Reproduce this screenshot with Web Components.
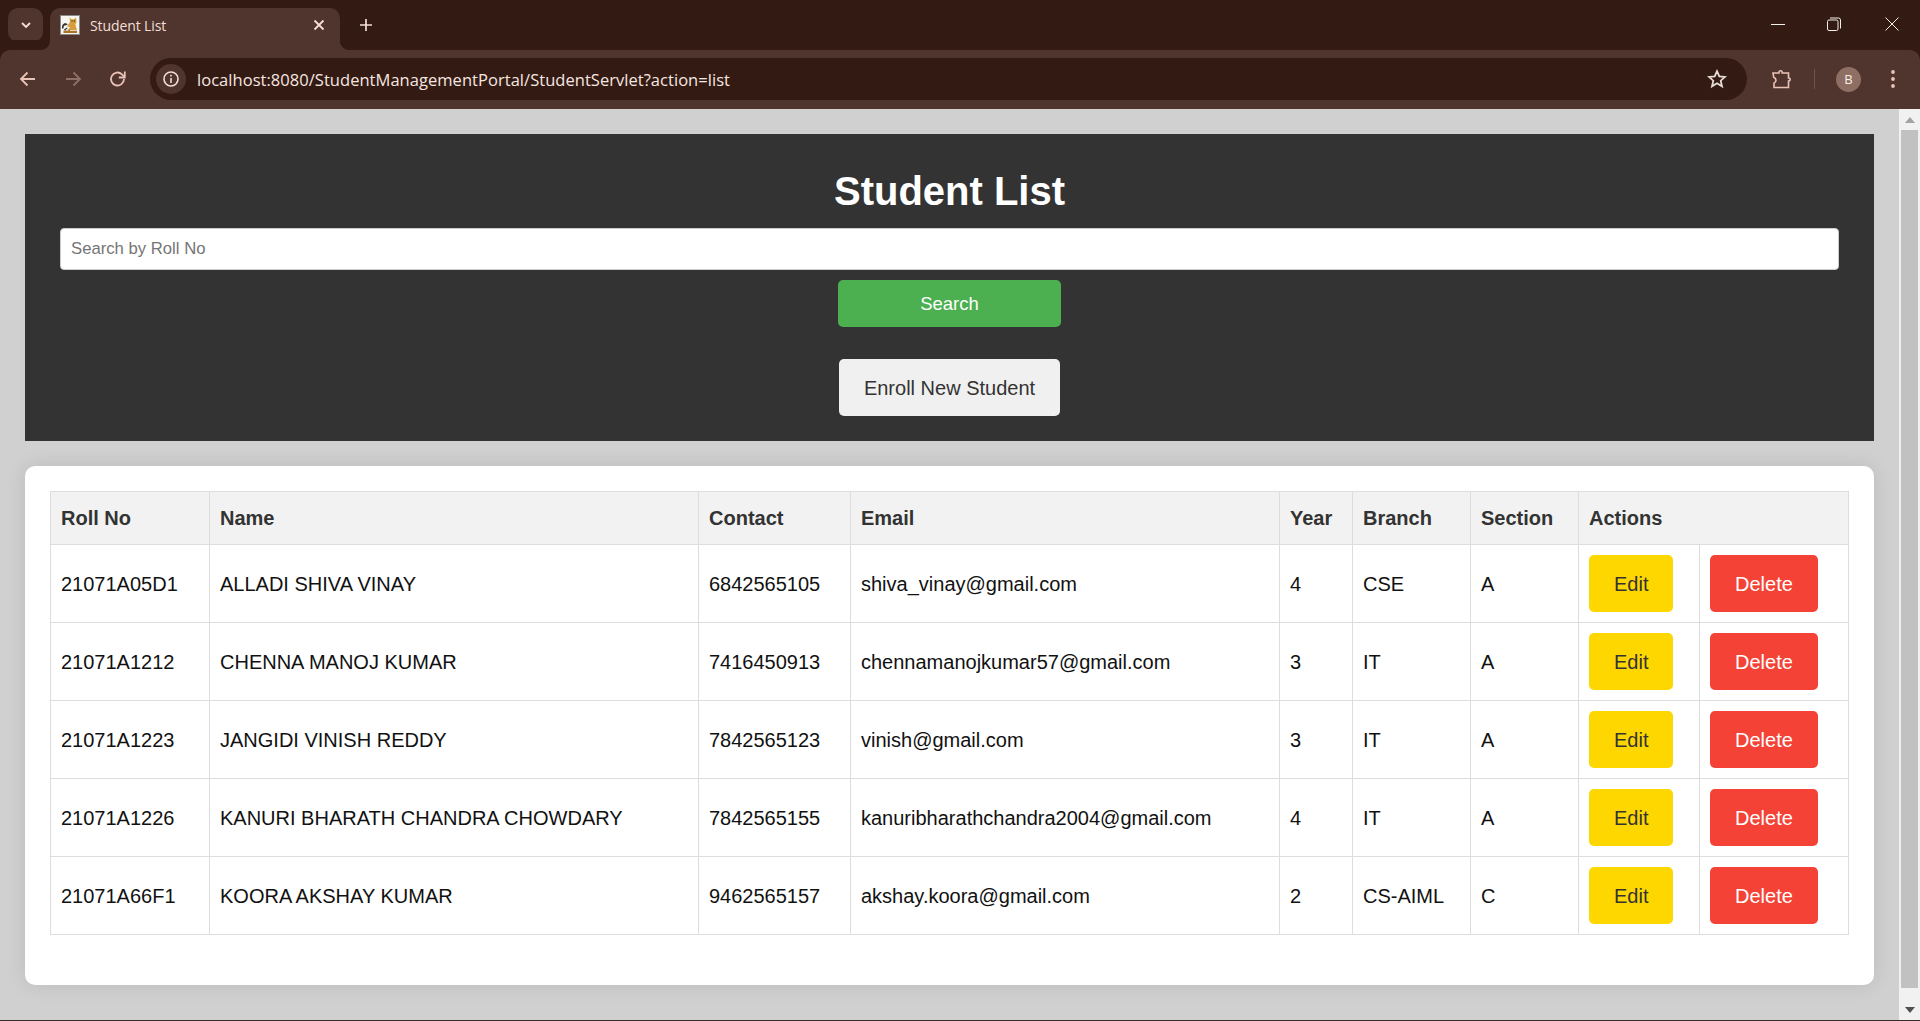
<!DOCTYPE html>
<html lang="en">
<head>
<meta charset="utf-8">
<title>Student List</title>
<style>
    html, body { margin: 0; height: 100%; overflow: hidden; }
    body { font-family: "Liberation Sans", Arial, sans-serif; background: #d0d0d0; }
    #window { display: flex; flex-direction: column; height: 1021px; border-bottom: 1px solid #3a2a26; box-sizing: border-box; }
</style>
</head>
<body>
<div id="window">
    <browser-tabs></browser-tabs>
    <browser-toolbar></browser-toolbar>
    <page-view>
        <student-header></student-header>
        <student-table></student-table>
    </page-view>
</div>

<script>
// browser-tabs.js
class BrowserTabs extends HTMLElement {
    constructor() {
        super();
        this.attachShadow({ mode: 'open' });
    }

    connectedCallback() {
        this.shadowRoot.innerHTML = `
            <style>
                :host { display: flex; height: 50px; background: #331a13; flex: none; color: #f3dfd8;
                    font-family: "Open Sans", "Noto Sans", sans-serif; }
                .drop { width: 35px; height: 34px; margin: 8px 7px 0 8px; background: #4f352e; border-radius: 10px;
                    display: flex; align-items: center; justify-content: center; }
                .tab { position: relative; width: 290px; height: 42px; margin-top: 8px; background: #4f352e;
                    border-radius: 10px 10px 0 0; display: flex; align-items: center; padding: 0 0 8px 10px; box-sizing: border-box; }
                .tab::before, .tab::after { content: ""; position: absolute; bottom: 0; width: 10px; height: 10px; }
                .tab::before { left: -10px; background: radial-gradient(circle at 0 0, transparent 10px, #4f352e 10.5px); }
                .tab::after { right: -10px; background: radial-gradient(circle at 100% 0, transparent 10px, #4f352e 10.5px); }
                .title { font-size: 14px; margin-left: 10px; flex: 1; letter-spacing: -0.1px; }
                .close { width: 14px; height: 14px; margin-right: 14px; }
                .plus { margin: 18px 0 0 19px; width: 14px; height: 14px; }
                .spacer { flex: 1; }
                .win { width: 55px; height: 48px; display: flex; align-items: center; justify-content: center; }
                .win.first { margin-right: 1px; }
                .win.last { margin-left: 3px; margin-right: 1px; }
            </style>
            <div class="drop">
                <svg width="12" height="12" viewBox="0 0 12 12" fill="none" stroke="#f3dfd8" stroke-width="1.8"><path d="M2 4l4 4 4-4"/></svg>
            </div>
            <div class="tab">
                <svg width="20" height="20" viewBox="0 0 20 20">
                    <rect x=".5" y=".5" width="19" height="19" fill="#f7f5ef" stroke="#8a8a8a"/>
                    <path d="M9.500 2.500l2 1.800h2.500l2-1.800.6 4.500-1.200 2.500 1.600 5.500H8l2-3-3-.5L10 7z" fill="#d69f3c"/>
                    <path d="M2 13.500c-.3-3.500 1.500-6 4-5.200l1.800.9-2 1.200c-1.500-.4-2.300.9-2.300 3.100z" fill="#2e2e2e"/>
                    <path d="M3.500 15.500H8l1.500-1.500.6 1.700H17v2.300H3.500z" fill="#a9762a"/>
                    <path d="M4 14.500l3-2 .6.800-2.600 2.200z" fill="#2e2e2e"/>
                    <circle cx="12" cy="6" r=".7" fill="#333"/><circle cx="14.300" cy="6" r=".7" fill="#333"/>
                </svg>
                <span class="title">Student List</span>
                <svg class="close" viewBox="0 0 14 14" stroke="#f3dfd8" stroke-width="1.8"><path d="M2.500 2.500l9 9M11.500 2.500l-9 9"/></svg>
            </div>
            <svg class="plus" viewBox="0 0 14 14" stroke="#f3dfd8" stroke-width="1.7"><path d="M7 1v12M1 7h12"/></svg>
            <div class="spacer"></div>
            <div class="win first"><svg width="14" height="14" viewBox="0 0 14 14" stroke="#f3eeec"><path d="M0 7.500h14"/></svg></div>
            <div class="win"><svg width="14" height="14" viewBox="0 0 14 14" fill="none" stroke="#f3eeec"><rect x=".5" y="3" width="10.500" height="10.500" rx="1.500"/><path d="M3 1h8.500a2 2 0 0 1 2 2v8.500"/></svg></div>
            <div class="win last"><svg width="14" height="14" viewBox="0 0 14 14" stroke="#f3eeec"><path d="M.5.5l13 13M13.500.5l-13 13"/></svg></div>
        `;
    }
}
customElements.define('browser-tabs', BrowserTabs);

// browser-toolbar.js
class BrowserToolbar extends HTMLElement {
    constructor() {
        super();
        this.attachShadow({ mode: 'open' });
    }

    connectedCallback() {
        this.shadowRoot.innerHTML = `
            <style>
                :host { display: flex; align-items: center; height: 59px; flex: none; background: #4f352e;
                    border-radius: 10px 10px 0 0; color: #f3dfd8; box-sizing: border-box; padding: 0 0 1px 17px;
                    box-shadow: 0 -10px 0 #331a13; font-family: "Open Sans", "Noto Sans", sans-serif; }
                svg { flex: none; display: block; }
                .nav { margin-right: 23px; }
                .omni { flex: none; width: 1597px; height: 42px; margin-left: 21px; background: #331a13; border-radius: 21px;
                    display: flex; align-items: center; box-sizing: border-box; padding-left: 6px; }
                .info { width: 30px; height: 30px; border-radius: 50%; background: #4f352e; display: flex; align-items: center; justify-content: center; }
                .url { font-size: 16.5px; margin-left: 11px; flex: 1; color: #f6e6e0; letter-spacing: 0.04px; white-space: nowrap; }
                .star { margin-right: 20px; }
                .puzzle { margin-left: 23px; }
                .sep { width: 1px; height: 20px; background: #6f5248; margin-left: 22px; }
                .avatar { width: 25px; height: 25px; border-radius: 50%; background: #8f6f64; color: #f8ece8; font-size: 13px;
                    display: flex; align-items: center; justify-content: center; margin-left: 21px; }
                .menu { margin-left: 30px; }
            </style>
            <svg class="nav" width="22" height="22" viewBox="0 0 22 22" fill="none" stroke="#e9c3b6" stroke-width="1.800"><path d="M18 11H4M10.500 4.500L4 11l6.500 6.500"/></svg>
            <svg class="nav" width="22" height="22" viewBox="0 0 22 22" fill="none" stroke="#8f7066" stroke-width="1.800"><path d="M4 11h14M11.500 4.500L18 11l-6.500 6.500"/></svg>
            <svg width="22" height="22" viewBox="0 0 22 22" fill="none" stroke="#e9c3b6" stroke-width="1.800"><path d="M17 11a6.500 6.500 0 1 1-2-4.700L17.500 9"/><path d="M17.800 3.500v6h-6" /></svg>
            <div class="omni">
                <div class="info">
                    <svg width="18" height="18" viewBox="0 0 18 18" fill="none" stroke="#f3dfd8" stroke-width="1.600"><circle cx="9" cy="9" r="7"/><path d="M9 8v5"/><path d="M9 4.800v1.700"/></svg>
                </div>
                <span class="url">localhost:8080/StudentManagementPortal/StudentServlet?action=list</span>
                <svg class="star" width="20" height="20" viewBox="0 0 20 20" fill="none" stroke="#e8dcd7" stroke-width="1.800"><path d="M10 2.200l2.300 5.200 5.700.5-4.300 3.800 1.300 5.600-5-3-5 3 1.300-5.600L2 7.900l5.700-.5z"/></svg>
            </div>
            <svg class="puzzle" width="22" height="22" viewBox="0 0 22 22" fill="none" stroke="#e9c3b6" stroke-width="1.600"><path d="M3 5h6V4.300a1.600 1.600 0 0 1 3.200 0V5H18.500v5h.6a1.600 1.600 0 0 1 0 3h-.6v6.500H4v-4.300c1.300-.7 2-1.700 2-2.900s-1-2.400-2.300-3z"/></svg>
            <div class="sep"></div>
            <div class="avatar">B</div>
            <svg class="menu" width="4" height="18" viewBox="0 0 4 18" fill="#e9c3b6"><circle cx="2" cy="2" r="1.900"/><circle cx="2" cy="9" r="1.900"/><circle cx="2" cy="16" r="1.900"/></svg>
        `;
    }
}
customElements.define('browser-toolbar', BrowserToolbar);

// page-view.js: the scrolling page area with its scrollbar
class PageView extends HTMLElement {
    constructor() {
        super();
        this.attachShadow({ mode: 'open' });
    }

    connectedCallback() {
        this.shadowRoot.innerHTML = `
            <style>
                :host { display: flex; flex: 1; min-height: 0; background: #d0d0d0; }
                main { flex: 1; display: flex; flex-direction: column; gap: 25px; padding: 25px; min-width: 0; }
                .bar { width: 21px; flex: none; background: #f1f1f1; display: flex; flex-direction: column; align-items: center; box-sizing: border-box; }
                .arrow { height: 21px; flex: none; display: flex; align-items: center; justify-content: center; }
                .thumb { width: 17px; flex: 1; background: #c1c1c1; margin: 0 0 11px; }
            </style>
            <main><slot></slot></main>
            <div class="bar">
                <div class="arrow"><svg width="10" height="6" viewBox="0 0 10 6"><path d="M5 0l5 6H0z" fill="#a3a3a3"/></svg></div>
                <div class="thumb"></div>
                <div class="arrow"><svg width="10" height="6" viewBox="0 0 10 6"><path d="M0 0h10L5 6z" fill="#505050"/></svg></div>
            </div>
        `;
    }
}
customElements.define('page-view', PageView);

// action-button.js
class ActionButton extends HTMLElement {
    constructor() {
        super();
        this.attachShadow({ mode: 'open' });
    }

    connectedCallback() {
        const bg = this.getAttribute('bg');
        const color = this.getAttribute('color');
        this.shadowRoot.innerHTML = `
            <style>
                :host { display: inline-block; vertical-align: top; }
                div { background: ${bg}; color: ${color}; font-size: 20px; line-height: 58px; height: 57px;
                    padding: 0 25px; border-radius: 5px; text-align: center; }
            </style>
            <div><slot></slot></div>
        `;
    }
}
customElements.define('action-button', ActionButton);

// student-header.js
class StudentHeader extends HTMLElement {
    constructor() {
        super();
        this.attachShadow({ mode: 'open' });
    }

    connectedCallback() {
        this.shadowRoot.innerHTML = `
            <style>
                :host { display: flex; flex-direction: column; align-items: center; flex: none; background: #333;
                    padding: 34px 35px 25px; color: #fff; font-family: "Liberation Sans", Arial, sans-serif; }
                h1 { margin: 0 0 14px; font-size: 40px; line-height: 46px; font-weight: bold; }
                input { display: block; width: 100%; height: 42px; box-sizing: border-box; border: 1px solid #ccc; border-radius: 4px;
                    padding: 0 10px; font: 16.7px "Liberation Sans", Arial, sans-serif; background: #fff; margin: 0; outline: none; }
                input::placeholder { color: #757575; }
                .search { width: 223px; height: 47px; margin-top: 10px; background: #4caf50; color: #fff; border-radius: 5px;
                    font-size: 18.5px; line-height: 47px; text-align: center; }
                action-button { margin-top: 32px; }
            </style>
            <h1>Student List</h1>
            <input type="text" placeholder="Search by Roll No">
            <div class="search">Search</div>
            <action-button bg="#f0f0f0" color="#333">Enroll New Student</action-button>
        `;
    }
}
customElements.define('student-header', StudentHeader);

// student-table.js
const students = [
    ['21071A05D1', 'ALLADI SHIVA VINAY', '6842565105', 'shiva_vinay@gmail.com', '4', 'CSE', 'A'],
    ['21071A1212', 'CHENNA MANOJ KUMAR', '7416450913', 'chennamanojkumar57@gmail.com', '3', 'IT', 'A'],
    ['21071A1223', 'JANGIDI VINISH REDDY', '7842565123', 'vinish@gmail.com', '3', 'IT', 'A'],
    ['21071A1226', 'KANURI BHARATH CHANDRA CHOWDARY', '7842565155', 'kanuribharathchandra2004@gmail.com', '4', 'IT', 'A'],
    ['21071A66F1', 'KOORA AKSHAY KUMAR', '9462565157', 'akshay.koora@gmail.com', '2', 'CS-AIML', 'C']
];

class StudentTable extends HTMLElement {
    constructor() {
        super();
        this.attachShadow({ mode: 'open' });
    }

    connectedCallback() {
        const widths = [159, 489, 152, 429, 73, 118, 108, 121, 149];
        const rows = students.map(s => `
            <tr>
                ${s.map(v => `<td class="text">${v}</td>`).join('')}
                <td><action-button bg="#ffd700" color="#333">Edit</action-button></td>
                <td><action-button bg="#f44336" color="#fff">Delete</action-button></td>
            </tr>`).join('');
        this.shadowRoot.innerHTML = `
            <style>
                :host { display: block; flex: none; background: #fff; border-radius: 10px; padding: 25px 26px 50px 25px;
                    box-shadow: 0 0 20px rgba(0, 0, 0, 0.1); font-family: "Liberation Sans", Arial, sans-serif; }
                table { width: 100%; table-layout: fixed; border-collapse: collapse; font-size: 20px; color: #111; }
                th, td { border: 1px solid #ddd; padding: 10px; text-align: left; white-space: nowrap; }
                th { background: #f2f2f2; color: #333; font-weight: bold; height: 53px; box-sizing: border-box; padding: 0 10px; }
                td { height: 78px; box-sizing: border-box; }
                td.text { padding-top: 12px; }
            </style>
            <table>
                <colgroup>${widths.map(w => `<col style="width:${w}px">`).join('')}</colgroup>
                <thead>
                    <tr>
                        <th>Roll No</th><th>Name</th><th>Contact</th><th>Email</th><th>Year</th><th>Branch</th><th>Section</th>
                        <th colspan="2">Actions</th>
                    </tr>
                </thead>
                <tbody>${rows}</tbody>
            </table>
        `;
    }
}
customElements.define('student-table', StudentTable);
</script>
</body>
</html>
